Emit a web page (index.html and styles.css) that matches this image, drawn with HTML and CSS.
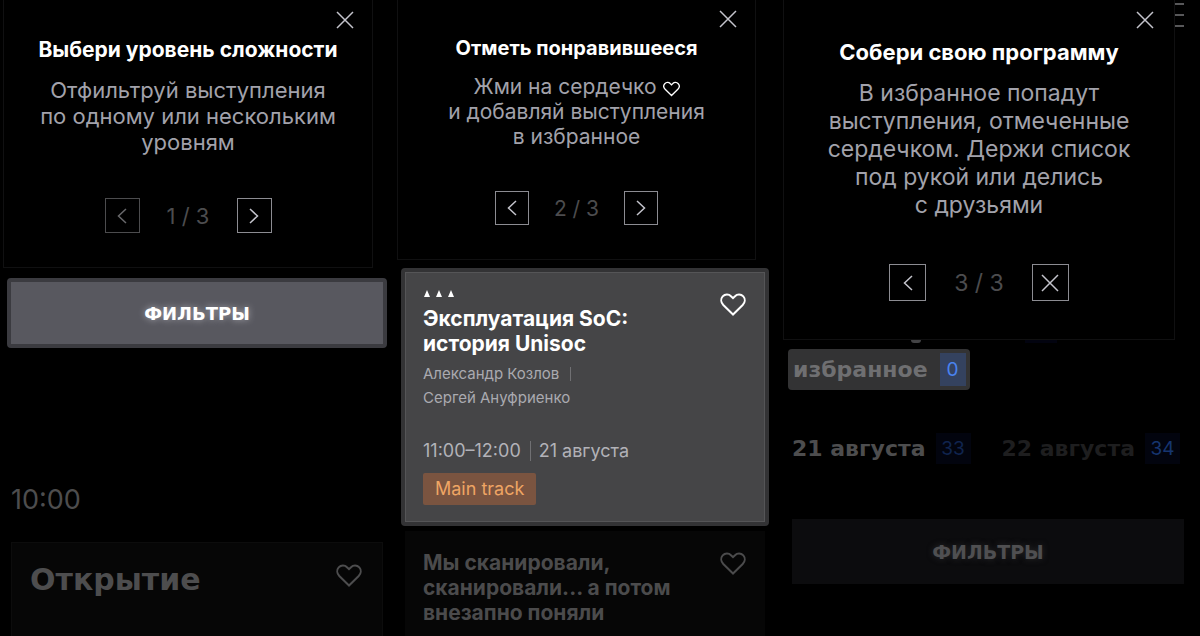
FILE: index.html
```html
<!DOCTYPE html>
<html lang="ru">
<head>
  <meta charset="UTF-8" />
  <meta name="viewport" content="width=device-width, initial-scale=1" />
  <title>Программа</title>
  <link rel="stylesheet" href="styles.css">
</head>
<body>

<svg class="sprite" aria-hidden="true">
  <symbol id="close" viewBox="0 0 18 18"><path d="M1 1l16 16M17 1L1 17" /></symbol>
  <symbol id="prev" viewBox="0 0 18 18"><path d="M13 2L5.500 9l7.500 7" /></symbol>
  <symbol id="next" viewBox="0 0 18 18"><path d="M5 2L12.500 9L5 16" /></symbol>
  <symbol id="heart" viewBox="0 0 26 23"><path d="M13 21.500L3.300 12C0.800 9.400 0.600 5.700 2.700 3.400 5 0.900 8.800 0.900 11 3.200L13 5.200l2-2c2.200-2.300 6-2.300 8.300 0.200 2.100 2.300 1.900 6-0.600 8.600z" /></symbol>
</svg>

<main class="screens">
  <section class="screen screen-level">
    <div class="tour" role="dialog" aria-labelledby="tour1">
      <button class="close" aria-label="Закрыть"><svg><use href="#close" /></svg></button>
      <h2 id="tour1">Выбери уровень сложности</h2>
      <p>Отфильтруй выступления<br>по одному или нескольким<br>уровням</p>
      <div class="steps">
        <button aria-label="Назад" disabled><svg><use href="#prev" /></svg></button>
        <span>1 / 3</span>
        <button aria-label="Вперёд"><svg><use href="#next" /></svg></button>
      </div>
    </div>
    <button class="filters active">ФИЛЬТРЫ</button>
    <time class="hour">10:00</time>
    <article class="talk opening">
      <h3>Открытие</h3>
      <button class="like" aria-label="В избранное"><svg><use href="#heart" /></svg></button>
    </article>
  </section>

  <section class="screen screen-like">
    <div class="tour" role="dialog" aria-labelledby="tour2">
      <button class="close" aria-label="Закрыть"><svg><use href="#close" /></svg></button>
      <h2 id="tour2">Отметь понравившееся</h2>
      <p>Жми на сердечко <svg class="inline-heart"><use href="#heart" /></svg><br>и добавляй выступления<br>в избранное</p>
      <div class="steps">
        <button aria-label="Назад"><svg><use href="#prev" /></svg></button>
        <span>2 / 3</span>
        <button aria-label="Вперёд"><svg><use href="#next" /></svg></button>
      </div>
    </div>
    <article class="talk active">
      <div>
        <svg class="level" viewBox="0 0 30 7"><path d="M0 7l3-7 3 7zM12 7l3-7 3 7zM24 7l3-7 3 7z" /></svg>
        <h3>Эксплуатация SoC:<br>история Unisoc</h3>
        <p class="speakers"><span>Александр Козлов</span><br>Сергей Ануфриенко</p>
        <p class="when"><time>11:00–12:00</time><span>21 августа</span></p>
        <span class="track">Main track</span>
      </div>
      <button class="like" aria-label="В избранное"><svg><use href="#heart" /></svg></button>
    </article>
    <article class="talk dim">
      <h3>Мы сканировали,<br>сканировали... а потом<br>внезапно поняли</h3>
      <button class="like" aria-label="В избранное"><svg><use href="#heart" /></svg></button>
    </article>
  </section>

  <section class="screen screen-favorites">
    <div class="top">
      <div class="tour" role="dialog" aria-labelledby="tour3">
        <button class="close" aria-label="Закрыть"><svg><use href="#close" /></svg></button>
        <h2 id="tour3">Собери свою программу</h2>
        <p>В избранное попадут<br>выступления, отмеченные<br>сердечком. Держи список<br>под рукой или делись<br>с друзьями</p>
        <div class="steps">
          <button aria-label="Назад"><svg><use href="#prev" /></svg></button>
          <span>3 / 3</span>
          <button aria-label="Закрыть"><svg><use href="#close" /></svg></button>
        </div>
      </div>
      <button class="menu" aria-label="Меню"></button>
    </div>
    <div class="behind"><i class="tail"></i><i class="chip"></i></div>
    <a class="favorites" href="#favorites">избранное <b>0</b></a>
    <nav class="days">
      <a href="#21">21 августа <b>33</b></a>
      <a class="other" href="#22">22 августа <b>34</b></a>
    </nav>
    <button class="filters">ФИЛЬТРЫ</button>
  </section>
</main>

</body>
</html>
```

FILE: styles.css
```css
* { box-sizing: border-box; }
body { margin: 0; background: #000; color: #fff; font-family: Inter, "Noto Sans", sans-serif; }
h2, h3, p { margin: 0; }
button { padding: 0; border: 0; background: none; color: inherit; font: inherit; cursor: pointer; }
a { color: inherit; text-decoration: none; }
svg { display: block; fill: none; stroke: currentColor; stroke-width: 1.5; }
.sprite { position: absolute; width: 0; height: 0; }

.screens { display: grid; grid-template-columns: 393fr 387fr 420fr; min-height: 100vh; }
.screen { display: flex; flex-direction: column; min-width: 0; }

/* onboarding card */
.tour { display: flex; flex-direction: column; align-items: center; border: 1px solid #101011; border-top: 0; text-align: center; }
.tour h2 { font-size: 21px; line-height: 26px; font-weight: 700; white-space: nowrap; }
.tour p { color: #a2a2ab; white-space: nowrap; }
.close { align-self: flex-end; color: #c4c4cc; }
.close svg { width: 18px; height: 18px; }
.steps { display: flex; align-items: center; justify-content: space-between; color: #4c4c4e; }
.steps button { display: grid; place-items: center; border: 1px solid #8c8c92; color: #c4c4cc; }
.steps button:disabled { border-color: #4c4c4e; color: #68686b; }
.steps svg { width: 18px; height: 18px; }

.screen-level .tour { margin: 0 20px 0 3px; padding: 11px 18px 34px; }
.screen-level h2 { margin-top: 8px; }
.screen-level .tour p { margin-top: 14px; font-size: 22px; line-height: 26px; }
.screen-level .steps { width: 167px; margin-top: 43px; font-size: 22px; }
.screen-level .steps button { width: 35px; height: 35px; }

.screen-like .tour { margin: 0 24px 0 4px; padding: 10px 18px 34px; }
.screen-like .tour h2 { margin-top: 7px; font-size: 20px; }
.screen-like .tour p { margin-top: 13px; font-size: 21px; line-height: 25px; }
.screen-like .steps { width: 163px; margin-top: 42px; font-size: 21px; }
.screen-like .steps button { width: 34px; height: 34px; }
.inline-heart { display: inline-block; width: 17px; height: 16px; color: #fff; stroke-width: 2; vertical-align: -3px; }

.top { display: flex; }
.screen-favorites .tour { flex: 1; margin-left: 3px; padding: 11px 20px 38px; }
.screen-favorites h2 { margin-top: 10px; font-size: 22px; }
.screen-favorites .tour p { margin-top: 14px; font-size: 23px; line-height: 28px; }
.screen-favorites .steps { width: 180px; margin-top: 45px; font-size: 23px; }
.screen-favorites .steps button { width: 37px; height: 37px; }
.menu { width: 9px; height: 25px; margin: 3px 16px 0 0; background: linear-gradient(#58585a 2px, transparent 2px) 0 0 / 9px 11px; }

/* filters */
.filters { height: 65px; margin: 0 16px 0 12px; background: #0c0c0e; color: #4f4f51; font-size: 19px; font-weight: 700; font-family: "DejaVu Sans", sans-serif; text-shadow: 0 0 6px #29292b; }
.filters.active { height: 70px; margin: 10px 6px 0 7px; border: 4px solid #3b3b40; border-radius: 4px; background: #58585f; color: #fff; font-size: 18px; text-shadow: 0 0 7px #a5a5ad; }
.hour { margin: 134px 0 0 11px; color: #4d4d4e; font-size: 27px; line-height: 36px; }

/* talks */
.talk { display: flex; justify-content: space-between; align-items: flex-start; }
.talk h3 { font-size: 21px; line-height: 25px; white-space: nowrap; }
.like svg { width: 26px; height: 23px; stroke-width: 2; }
.opening { flex: 1; margin: 24px 10px 0 11px; padding: 19px 20px 0 18px; border: 1px solid #0c0c0c; border-bottom: 0; background: #060606; color: #4d4d4e; }
.talk.opening h3 { font-family: "DejaVu Sans", sans-serif; font-size: 30px; line-height: 36px; }
.opening .like { margin-top: 2px; }
.talk.active { margin: 8px 11px 0 8px; padding: 18px 19px 17px 18px; border: 4px solid #333335; border-radius: 4px; background: #454547; box-shadow: inset 0 0 0 1px #555557; }
.talk.active .like { margin-top: 3px; }
.level { width: 30px; height: 7px; margin: 0 0 9px 1px; fill: #fff; stroke: none; }
.speakers { margin-top: 6px; color: #aaaab0; font-size: 15px; line-height: 24px; }
.speakers span { padding-right: 12px; background: linear-gradient(#707073, #707073) right / 1px 14px no-repeat; }
.when { display: flex; margin-top: 31px; color: #b2b2b8; font-size: 18px; line-height: 20px; }
.when time { padding-right: 9px; margin-right: 8px; border-right: 1px solid #707073; }
.track { display: inline-block; margin-top: 12px; padding: 0 12px; border-radius: 2px; background: #7a5440; color: #efa564; font-size: 18px; line-height: 32px; }
.dim { flex: 1; margin: 5px 15px 0 12px; padding: 19px 19px 10px 18px; background: #060606; color: #4b4b4c; }
.dim .like { margin-top: 2px; }

/* page under the third card */
.behind { display: flex; gap: 104px; height: 9px; padding-left: 131px; }
.tail { width: 10px; height: 3px; border-radius: 0 0 5px 5px; background: #434345; }
.chip { width: 32px; height: 3px; background: #02030f; }
.favorites, .days { font-family: "DejaVu Sans", sans-serif; font-weight: 700; font-size: 22px; }
.favorites { display: flex; align-items: center; justify-content: space-between; align-self: flex-start; gap: 12px; height: 41px; margin-left: 8px; padding: 0 4px 0 5px; border-radius: 4px; background: #333334; color: #6f6f71; }
.favorites b, .days b { display: grid; place-items: center; font-family: Inter, sans-serif; font-weight: 400; font-size: 19px; }
.favorites b { width: 26px; height: 33px; background: #34425f; color: #4a83ef; }
.days { display: flex; justify-content: space-between; margin: 43px 20px 55px 12px; color: #4d4d4e; white-space: nowrap; }
.days a { display: flex; align-items: center; gap: 10px; }
.days b { width: 35px; height: 31px; background: #02040e; color: #10244f; }
.days .other { color: #1e1e1f; }
.days .other b { color: #16356f; }
```
